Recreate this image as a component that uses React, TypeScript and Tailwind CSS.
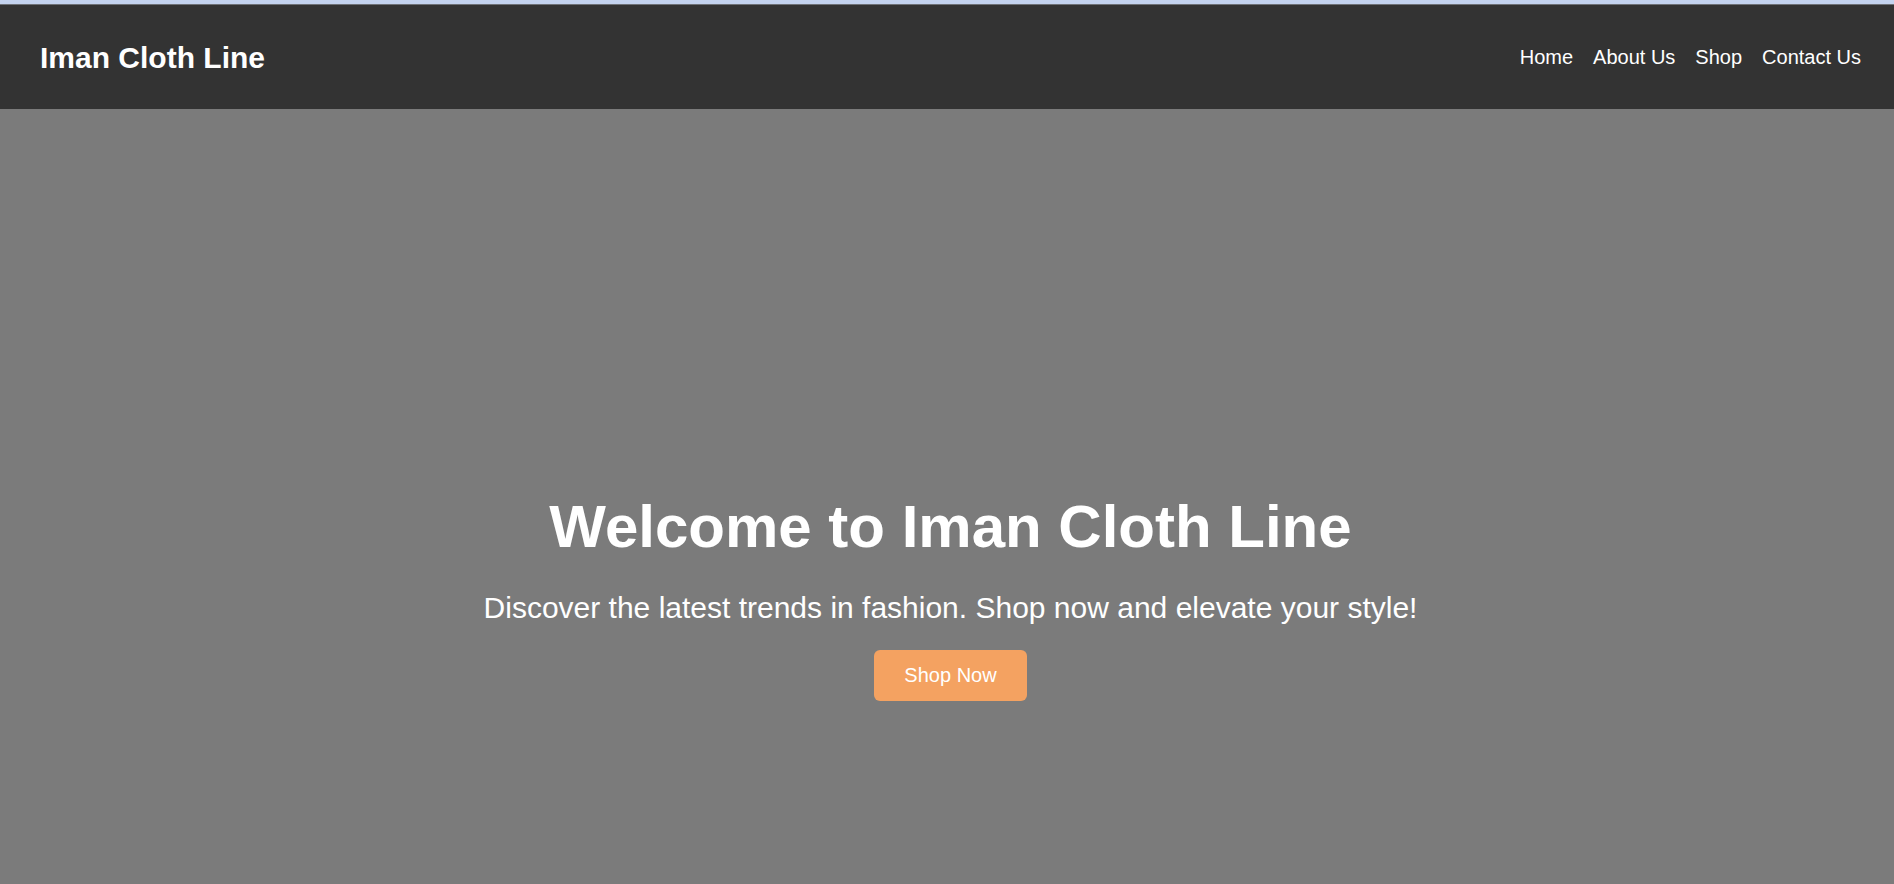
import React from 'react';

const App = () => {
  const links = ['Home', 'About Us', 'Shop', 'Contact Us'];

  return (
    <div className="min-h-screen bg-[#7b7b7b] font-['Liberation_Sans',Arial,sans-serif] text-white">
      {/* Top strip */}
      <div className="h-[4px] bg-[#c4d3ef]"></div>
      <div className="h-[1px] bg-[#6f7278]"></div>

      {/* Header */}
      <header className="h-[104px] bg-[#333333] flex items-center justify-between pl-[40px] pr-[33px] pt-[1px]">
        <h1 className="text-[30px] font-bold leading-[34px]">Iman Cloth Line</h1>
        <nav>
          <ul className="flex gap-[20px] text-[20px] leading-[23px]">
            {links.map((link) => (
              <li key={link}>
                <a href="#" className="text-white">{link}</a>
              </li>
            ))}
          </ul>
        </nav>
      </header>

      {/* Hero */}
      <section className="flex flex-col items-center text-center pl-[7px] pt-[383px] pb-[180px]">
        <h2 className="text-[60px] font-bold leading-[69px] mb-[30px]">Welcome to Iman Cloth Line</h2>
        <p className="text-[30px] leading-[34px] mb-[25px]">
          Discover the latest trends in fashion. Shop now and elevate your style!
        </p>
        <button className="bg-[#f4a261] text-white text-[20px] leading-[23px] px-[30px] py-[14px] rounded-[6px]">
          Shop Now
        </button>
      </section>
    </div>
  );
};

export default App;
